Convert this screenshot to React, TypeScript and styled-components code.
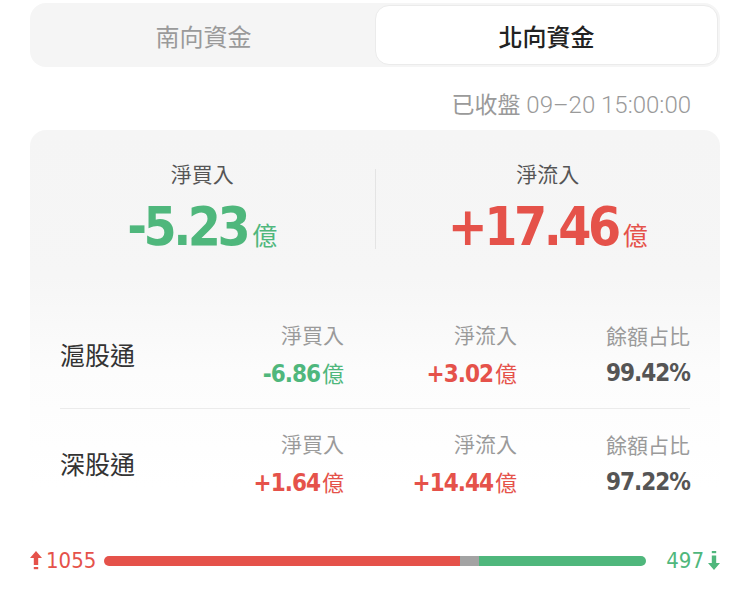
import React from 'react';
import styled, { createGlobalStyle } from 'styled-components';

const GREEN = '#4fb77c';
const RED = '#e5524a';

const GlobalStyle = createGlobalStyle`
  html, body {
    margin: 0;
    padding: 0;
    background: #fff;
  }
  body {
    font-family: "Noto Sans CJK TC", "Noto Sans", sans-serif;
    color: #333;
  }
`;

interface ColorProps {
  tone: 'up' | 'down' | 'flat';
}

const toneColor = (t: ColorProps['tone']) => (t === 'up' ? RED : t === 'down' ? GREEN : '#555');

const NUM_FONT = '"DejaVu Sans Condensed", "DejaVu Sans", sans-serif';

const Page = styled.div`
  width: 750px;
  height: 590px;
  overflow: hidden;
  padding-top: 3px;
  box-sizing: border-box;
`;

const Tabs = styled.div`
  margin: 0 30px;
  height: 64px;
  padding: 2px;
  box-sizing: border-box;
  background: #f5f5f5;
  border-radius: 16px;
  display: grid;
  grid-template-columns: 1fr 1fr;
`;

const Tab = styled.div<{ active?: boolean }>`
  display: flex;
  align-items: center;
  justify-content: center;
  border-radius: 14px;
  font-size: 24px;
  color: ${(p) => (p.active ? '#222' : '#9a9a9a')};
  font-weight: ${(p) => (p.active ? 500 : 400)};
  background: ${(p) => (p.active ? '#fff' : 'transparent')};
  border: 1px solid ${(p) => (p.active ? '#ebebeb' : 'transparent')};
`;

const Stamp = styled.div`
  height: 63px;
  padding: 20px 59px 0 0;
  box-sizing: border-box;
  text-align: right;
  font-size: 24px;
  color: #9a9a9a;
  line-height: 32px;
  font-family: "Roboto", "Noto Sans CJK TC", sans-serif;
  font-weight: 300;
  span {
    font-family: "Noto Sans CJK TC", sans-serif;
    font-size: 23px;
    font-weight: 400;
  }
`;

const Card = styled.div`
  margin: 0 30px;
  border-radius: 16px;
  background: linear-gradient(180deg, #f5f5f5 0%, #f6f6f6 38%, #fcfcfc 62%, #fff 92%);
`;

const Summary = styled.div`
  display: grid;
  grid-template-columns: 1fr 1px 1fr;
  padding: 27px 0 0;
  height: 170px;
  box-sizing: border-box;
`;

const SummaryCell = styled.div`
  display: flex;
  flex-direction: column;
  align-items: center;
`;

const SummaryLabel = styled.div`
  font-size: 21px;
  line-height: 32px;
  color: #555;
`;

const Divider = styled.div`
  background: #e4e4e4;
  height: 80px;
  margin-top: 12px;
`;

const BigValue = styled.div<ColorProps>`
  display: flex;
  align-items: baseline;
  margin-top: 8px;
  color: ${(p) => toneColor(p.tone)};
  font-family: ${NUM_FONT};
  font-size: 53px;
  font-weight: 700;
  line-height: 60px;
  letter-spacing: -3.5px;
  small {
    font-family: "Noto Sans CJK TC", sans-serif;
    font-size: 25px;
    font-weight: 400;
    letter-spacing: 0;
    margin-left: 5px;
  }
`;

const Rows = styled.div`
  padding: 0 30px;
`;

const Row = styled.div<{ last?: boolean }>`
  display: grid;
  grid-template-columns: 1fr 130px 173px 173px;
  align-items: center;
  height: 108px;
  border-bottom: 1px solid ${(p) => (p.last ? 'transparent' : '#ebebeb')};
`;

const RowName = styled.div`
  font-size: 25px;
  color: #333;
`;

const Stat = styled.div`
  display: flex;
  flex-direction: column;
  align-items: flex-end;
`;

const StatLabel = styled.div`
  font-size: 21px;
  line-height: 32px;
  color: #9a9a9a;
`;

const StatValue = styled.div<ColorProps>`
  margin-top: 6px;
  color: ${(p) => toneColor(p.tone)};
  font-family: ${NUM_FONT};
  font-size: 24px;
  font-weight: 700;
  letter-spacing: -1px;
  line-height: 32px;
  small {
    font-family: "Noto Sans CJK TC", sans-serif;
    font-size: 22px;
    font-weight: 400;
    letter-spacing: 0;
    margin-left: 2px;
  }
`;

const BreadthRow = styled.div`
  display: flex;
  align-items: center;
  padding: 28px 30px 0;
  height: 30px;
`;

const Count = styled.div<ColorProps>`
  display: flex;
  align-items: center;
  gap: 4px;
  color: ${(p) => toneColor(p.tone)};
  font-family: ${NUM_FONT};
  font-size: 22px;
  line-height: 28px;
`;

const Track = styled.div`
  flex: 1;
  display: flex;
  height: 10px;
  margin: 0 20px 0 8px;
  border-radius: 5px;
  overflow: hidden;
`;

const Segment = styled.div<ColorProps>`
  height: 100%;
  background: ${(p) => (p.tone === 'flat' ? '#a3a3a3' : toneColor(p.tone))};
`;

const ArrowUp = () => (
  <svg width="12" height="20" viewBox="0 0 12 20">
    <path d="M6 0 L12 7 H8.2 V14 H3.8 V7 H0 Z" fill={RED} />
    <rect x="3.8" y="16" width="4.4" height="2.2" fill={RED} />
  </svg>
);

const ArrowDown = () => (
  <svg width="12" height="20" viewBox="0 0 12 20">
    <rect x="3.8" y="0" width="4.4" height="2.2" fill={GREEN} />
    <path d="M6 19 L12 12 H8.2 V4.5 H3.8 V12 H0 Z" fill={GREEN} />
  </svg>
);

const rows = [
  { name: '滬股通', buy: '-6.86', flow: '+3.02', share: '99.42' },
  { name: '深股通', buy: '+1.64', flow: '+14.44', share: '97.22' },
];

const tone = (v: string): ColorProps['tone'] => (v.startsWith('-') ? 'down' : 'up');

const breadth = { up: 1055, flat: 57, down: 497 };

export default function App() {
  const total = breadth.up + breadth.flat + breadth.down;
  return (
    <Page>
      <GlobalStyle />
      <Tabs>
        <Tab>南向資金</Tab>
        <Tab active>北向資金</Tab>
      </Tabs>
      <Stamp>
        <span>已收盤</span> 09–20 15:00:00
      </Stamp>
      <Card>
        <Summary>
          <SummaryCell>
            <SummaryLabel>淨買入</SummaryLabel>
            <BigValue tone="down">
              -5.23<small>億</small>
            </BigValue>
          </SummaryCell>
          <Divider />
          <SummaryCell>
            <SummaryLabel>淨流入</SummaryLabel>
            <BigValue tone="up">
              +17.46<small>億</small>
            </BigValue>
          </SummaryCell>
        </Summary>
        <Rows>
          {rows.map((r, i) => (
            <Row key={r.name} last={i === rows.length - 1}>
              <RowName>{r.name}</RowName>
              <Stat>
                <StatLabel>淨買入</StatLabel>
                <StatValue tone={tone(r.buy)}>
                  {r.buy}
                  <small>億</small>
                </StatValue>
              </Stat>
              <Stat>
                <StatLabel>淨流入</StatLabel>
                <StatValue tone={tone(r.flow)}>
                  {r.flow}
                  <small>億</small>
                </StatValue>
              </Stat>
              <Stat>
                <StatLabel>餘額占比</StatLabel>
                <StatValue tone="flat">{r.share}%</StatValue>
              </Stat>
            </Row>
          ))}
        </Rows>
      </Card>
      <BreadthRow>
        <Count tone="up">
          <ArrowUp />
          {breadth.up}
        </Count>
        <Track>
          <Segment tone="up" style={{ width: `${(breadth.up / total) * 100}%` }} />
          <Segment tone="flat" style={{ width: `${(breadth.flat / total) * 100}%` }} />
          <Segment tone="down" style={{ width: `${(breadth.down / total) * 100}%` }} />
        </Track>
        <Count tone="down">
          {breadth.down}
          <ArrowDown />
        </Count>
      </BreadthRow>
    </Page>
  );
}
